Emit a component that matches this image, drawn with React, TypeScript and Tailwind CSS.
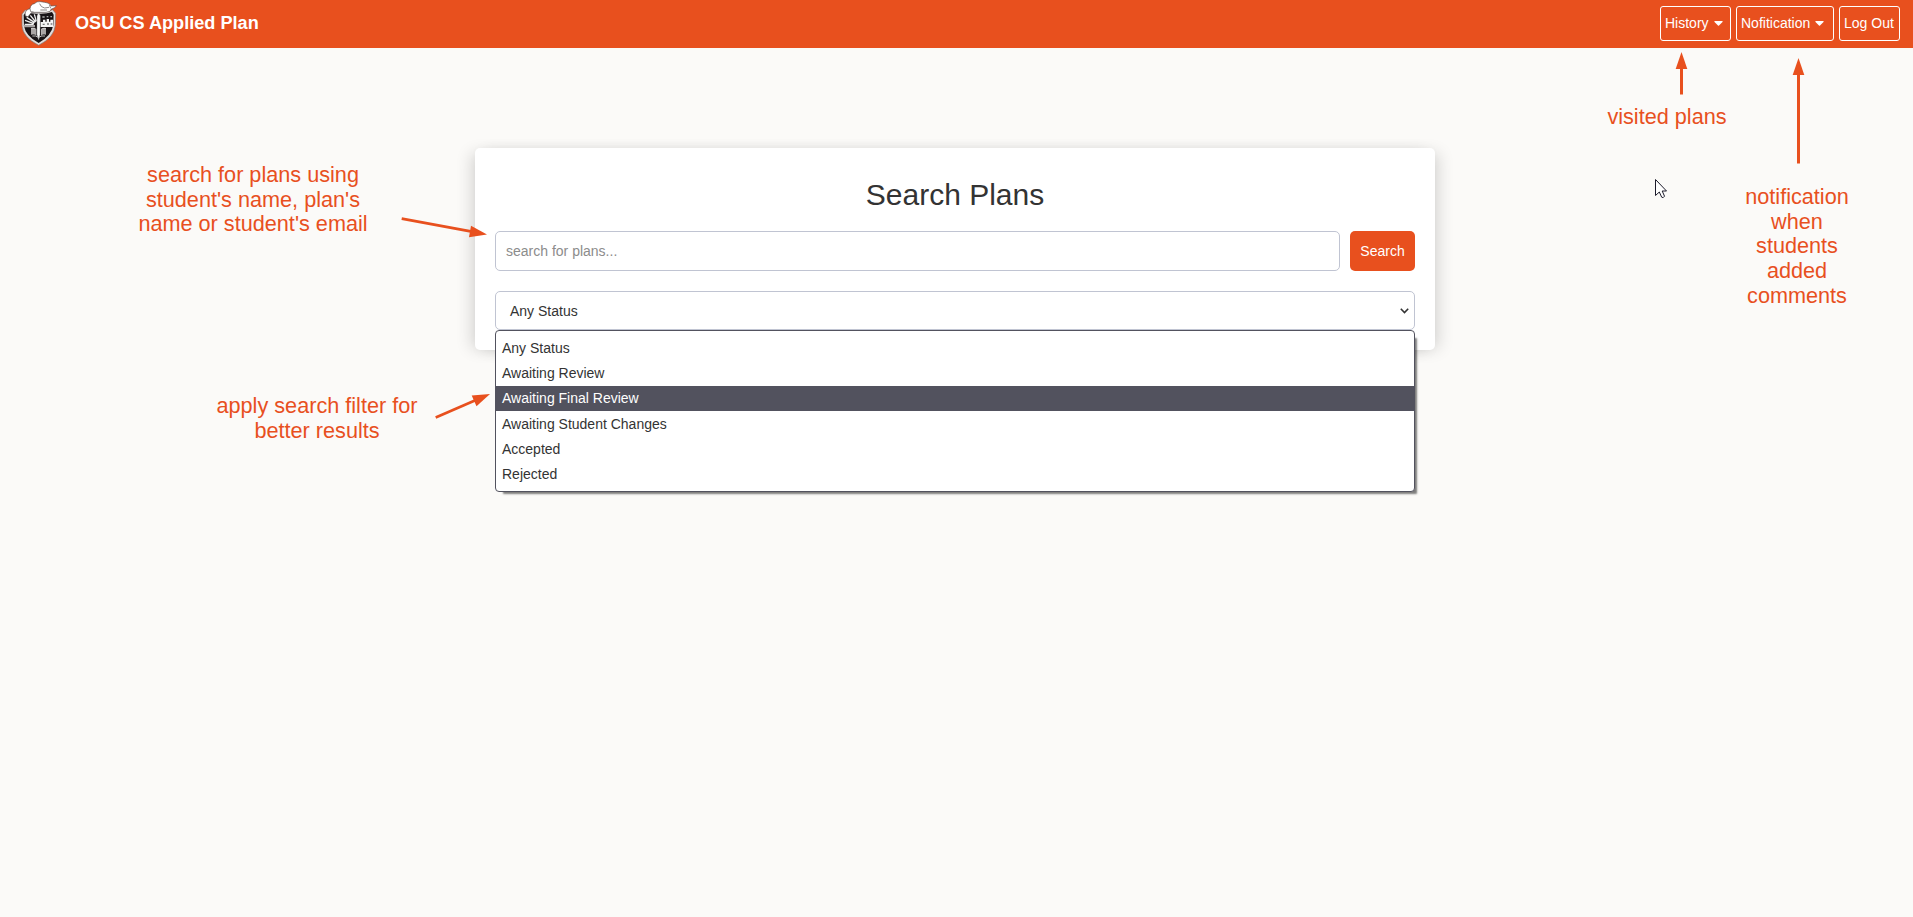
import React from "react";

const options = [
  "Any Status",
  "Awaiting Review",
  "Awaiting Final Review",
  "Awaiting Student Changes",
  "Accepted",
  "Rejected",
];

function Crest() {
  return (
    <svg className="mb-[2px] ml-px h-[46px] w-9" viewBox="63 0 108 138">
      <path d="M66 42 L76 30 Q90 36 116 36 Q142 36 158 29 L167 40 L166 76 Q163 112 116 136 Q69 112 66 78 Z" fill="#e2dcda" stroke="#7d6f6c" strokeWidth="2" />
      <path d="M71 45 L78 37 Q94 42 116 41 Q140 42 156 36 L161 44 L160 76 Q154 108 116 129 Q77 108 72 78 Z" fill="#171215" />
      <path d="M76 48 Q73 34 84 28 L90 26 Q92 12 103 11 Q110 3 122 5 L134 7 Q150 9 153 18 L169 17 L164 23 L153 28 L150 34 L138 37 L95 37 L84 50 Z" fill="#fff" stroke="#5b5151" strokeWidth="2" />
      <path d="M90 26 L92 35 L101 36 M119 11 Q122 22 134 24 L147 22 M121 30 L141 30 M148 14 L152 25" fill="none" stroke="#777070" strokeWidth="2.5" />
      <path d="M74 73 L101 73 M75 61 L102 71 M80 52 L104 68 M91 46 L107 66 M103 43 L109 64" stroke="#eee" strokeWidth="4" />
      <path d="M70 75 H105 V82 H73 Z" fill="#a9a5a5" />
      <path d="M111 47 L116 38 L121 47 L120 104 L116 120 L111 104 Z" fill="#f5f5f5" stroke="#777" />
      <path d="M122 66 H129 V59 H136 V65 H140 V57 H147 V65 H151 V59 H159 V81 H122 Z" fill="#f4f4f4" />
      <path d="M127 51 H134 M140 50 H145 M151 50 H156" stroke="#aaa" strokeWidth="4" />
      <path d="M128 73 H134 M141 72 H147 M152 72 H157" stroke="#777" strokeWidth="4" />
      <path d="M93 84 Q102 81 109 87 V107 Q102 101 93 104 Z M123 87 Q130 81 138 84 V104 Q130 101 123 107 Z" fill="#c9c7c7" />
      <path d="M93 90 H108 M93 96 H108 M93 102 H108 M124 90 H138 M124 96 H138 M124 102 H138" stroke="#696565" strokeWidth="2" />
      <path d="M97 108 Q107 106 115 112 Q126 106 135 108" fill="none" stroke="#bbb" strokeWidth="3" />
    </svg>
  );
}

function Caret() {
  return (
    <svg className="mt-px ml-[5px] h-[5px] w-[9px]" viewBox="0 0 9 5">
      <path d="M0.7 0 H8.3 Q9 .4 8.5 1 L5 4.6 Q4.5 5 4 4.6 L.5 1 Q0 .4 .7 0 Z" fill="#fff" />
    </svg>
  );
}

function Arrows() {
  return (
    <svg className="pointer-events-none absolute inset-0" width="1913" height="917" viewBox="0 0 1913 917">
      <g stroke="#e8501e" strokeWidth="3" fill="none">
        <path d="M1681.5 94.5 V66" />
        <path d="M1798.5 163.5 V72" />
        <path d="M401.7 218.6 L472 231.6" strokeWidth="2.7" />
        <path d="M435.7 417.5 L476 400" strokeWidth="2.7" />
      </g>
      <g fill="#e8501e">
        <path d="M1681.5 52 L1687.3 69 H1675.7 Z" />
        <path d="M1798.5 58 L1804.3 75 H1792.7 Z" />
        <path d="M487 234.6 L471 225.8 L469 237.2 Z" />
        <path d="M490 394 L471.7 395.4 L476.5 406.2 Z" />
      </g>
      <path d="M1655.5 179.5 V195.5 L1659.3 192 L1661.7 197.2 Q1663.3 198.5 1664.5 196.2 L1662.2 191 H1666.5 Z" fill="#fff" stroke="#1c1b2b" strokeWidth="1" />
    </svg>
  );
}

const note = "absolute text-center whitespace-nowrap text-[21.67px] leading-[24.7px] text-[#e8501e]";
const navButton = "flex h-[35px] items-center rounded-[3px] border border-white pb-[2px] pl-1 whitespace-nowrap";

export default function App() {
  return (
    <div className="relative h-[917px] w-full overflow-hidden bg-[#fbfaf8] font-['Liberation_Sans',Arial,sans-serif] text-sm text-[#333]">
      <header className="flex h-12 items-center bg-[#e8501e] pr-[13px] pl-5 text-white">
        <Crest />
        <h1 className="ml-[18px] pb-[2px] text-[18.15px] leading-[46px] font-bold">OSU CS Applied Plan</h1>
        <nav className="ml-auto flex gap-[5px] pb-px">
          <button className={`${navButton} w-[71px]`}>
            History
            <Caret />
          </button>
          <button className={`${navButton} w-[98px]`}>
            Nofitication
            <Caret />
          </button>
          <button className={`${navButton} w-[61px]`}>Log Out</button>
        </nav>
      </header>

      <main className="mt-[100px] ml-[475px] h-[202px] w-[960px] rounded-[5px] bg-white px-5 pt-[27px] shadow-[-7px_2px_16px_-3px_rgba(0,0,0,0.14),7px_2px_16px_-3px_rgba(0,0,0,0.14)]">
        <h2 className="text-center text-[30px] leading-10">Search Plans</h2>
        <div className="mt-4 flex gap-2.5">
          <div className="flex h-10 flex-1 items-center rounded-[5px] border border-[#c0c4d2] px-2.5 text-[#8c8c8c]">
            search for plans...
          </div>
          <button className="h-10 w-[65px] rounded-[5px] bg-[#e8501e] text-white">Search</button>
        </div>
        <div className="relative mt-5">
          <div className="flex h-[39px] items-center justify-between rounded-[5px] border border-[#c0c4d2] pr-[5px] pl-3.5">
            <span>Any Status</span>
            <svg className="h-[6px] w-[9px]" viewBox="0 0 9 6">
              <path d="M.8 .8 L4.5 4.5 L8.2 .8" fill="none" stroke="#333" strokeWidth="1.6" />
            </svg>
          </div>
          <ul className="absolute top-[39px] left-0 h-[162px] w-full rounded-[4px] border border-[#52525e] bg-white pt-[5px] shadow-[5px_5px_2px_-3px_rgba(0,0,0,0.5)]">
            {options.map((option) => (
              <li
                key={option}
                className={
                  option === "Awaiting Final Review"
                    ? "mb-[1px] h-[25px] bg-[#52525e] pl-[6px] leading-[25px] text-white"
                    : "h-[25px] pl-[6px] leading-[25px]"
                }
              >
                {option}
              </li>
            ))}
          </ul>
        </div>
      </main>

      <p className={`${note} top-[163px] left-[103px] w-[300px]`}>
        search for plans using
        <br />
        student's name, plan's
        <br />
        name or student's email
      </p>
      <p className={`${note} top-[394px] left-[167px] w-[300px]`}>
        apply search filter for
        <br />
        better results
      </p>
      <p className={`${note} top-[105px] left-[1567px] w-[200px]`}>visited plans</p>
      <p className={`${note} top-[185px] left-[1697px] w-[200px]`}>
        notification
        <br />
        when
        <br />
        students
        <br />
        added
        <br />
        comments
      </p>
      <Arrows />
    </div>
  );
}
